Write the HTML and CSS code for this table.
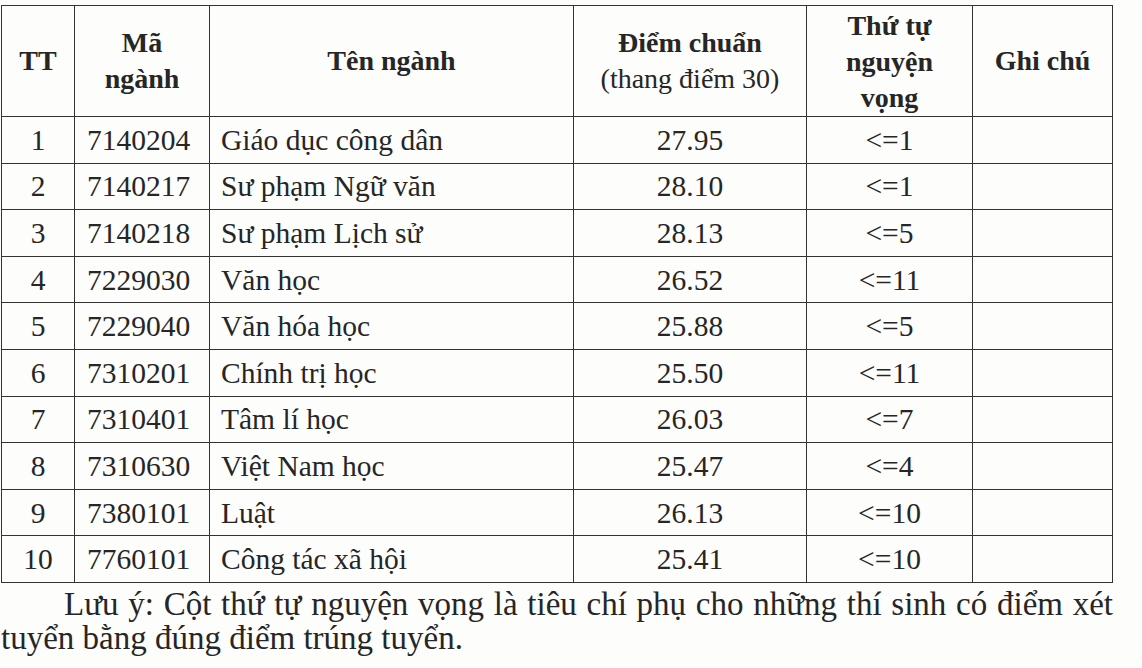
FILE: index.html
```html
<!DOCTYPE html>
<html lang="vi">
<head>
<meta charset="utf-8">
<link rel="stylesheet" href="styles.css">
</head>
<body>
<div class="page">
<table class="scores">
  <colgroup>
    <col class="c-tt"><col class="c-ma"><col class="c-ten"><col class="c-diem"><col class="c-tt2"><col class="c-gc">
  </colgroup>
  <thead>
    <tr>
      <th>TT</th>
      <th>Mã<br>ngành</th>
      <th>Tên ngành</th>
      <th>Điểm chuẩn<br><span class="thin">(thang điểm 30)</span></th>
      <th class="tight">Thứ tự<br>nguyện<br>vọng</th>
      <th>Ghi chú</th>
    </tr>
  </thead>
  <tbody>
    <tr><td class="ctr">1</td><td class="code">7140204</td><td class="name">Giáo dục công dân</td><td class="ctr">27.95</td><td class="ctr">&lt;=1</td><td></td></tr>
    <tr><td class="ctr">2</td><td class="code">7140217</td><td class="name">Sư phạm Ngữ văn</td><td class="ctr">28.10</td><td class="ctr">&lt;=1</td><td></td></tr>
    <tr><td class="ctr">3</td><td class="code">7140218</td><td class="name">Sư phạm Lịch sử</td><td class="ctr">28.13</td><td class="ctr">&lt;=5</td><td></td></tr>
    <tr><td class="ctr">4</td><td class="code">7229030</td><td class="name">Văn học</td><td class="ctr">26.52</td><td class="ctr">&lt;=11</td><td></td></tr>
    <tr><td class="ctr">5</td><td class="code">7229040</td><td class="name">Văn hóa học</td><td class="ctr">25.88</td><td class="ctr">&lt;=5</td><td></td></tr>
    <tr><td class="ctr">6</td><td class="code">7310201</td><td class="name">Chính trị học</td><td class="ctr">25.50</td><td class="ctr">&lt;=11</td><td></td></tr>
    <tr><td class="ctr">7</td><td class="code">7310401</td><td class="name">Tâm lí học</td><td class="ctr">26.03</td><td class="ctr">&lt;=7</td><td></td></tr>
    <tr><td class="ctr">8</td><td class="code">7310630</td><td class="name">Việt Nam học</td><td class="ctr">25.47</td><td class="ctr">&lt;=4</td><td></td></tr>
    <tr><td class="ctr">9</td><td class="code">7380101</td><td class="name">Luật</td><td class="ctr">26.13</td><td class="ctr">&lt;=10</td><td></td></tr>
    <tr><td class="ctr">10</td><td class="code">7760101</td><td class="name">Công tác xã hội</td><td class="ctr">25.41</td><td class="ctr">&lt;=10</td><td></td></tr>
  </tbody>
</table>
<p class="note">Lưu ý: Cột thứ tự nguyện vọng là tiêu chí phụ cho những thí sinh có điểm xét tuyển bằng đúng điểm trúng tuyển.</p>
</div>
</body>
</html>
```
FILE: styles.css
```css
html, body {
  margin: 0;
  padding: 0;
  background: #fdfdfc;
}
body {
  font-family: "Liberation Serif", "Times New Roman", serif;
  color: #262626;
  width: 1142px;
  height: 668px;
  overflow: hidden;
}
.page {
  padding: 5px 0 0 1px;
}
.scores {
  border-collapse: collapse;
  table-layout: fixed;
  width: 1111px;
  font-size: 29.5px;
}
.c-tt { width: 73px; }
.c-ma { width: 135px; }
.c-ten { width: 364px; }
.c-diem { width: 233px; }
.c-tt2 { width: 166px; }
.c-gc { width: 140px; }
.scores th, .scores td {
  border: 1.6px solid #333;
  padding: 0;
}
.scores th {
  height: 106px;
  font-weight: bold;
  font-size: 28px;
  line-height: 36px;
  text-align: center;
  vertical-align: middle;
}
.scores th.tight { line-height: 36px; padding-top: 2px; }
.thin { font-weight: normal; }
.scores td {
  height: 45.6px;
  line-height: 30px;
  vertical-align: middle;
}
.ctr { text-align: center; }
.code { padding-left: 12px !important; }
.name { padding-left: 11px !important; }
.note {
  margin: 0;
  font-size: 33px;
  line-height: 34px;
  text-indent: 63px;
  text-align: justify;
  width: 1112px;
  padding-top: 4px;
}
```
